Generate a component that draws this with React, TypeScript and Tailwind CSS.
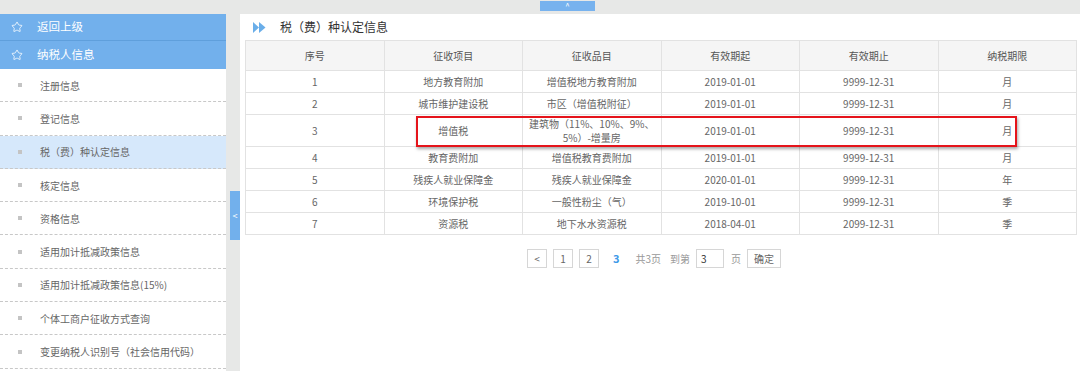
import { Star } from 'lucide-react';

const font = { fontFamily: '"Noto Sans CJK SC", "Noto Sans", sans-serif' };

const menu = [
  '注册信息',
  '登记信息',
  '税（费）种认定信息',
  '核定信息',
  '资格信息',
  '适用加计抵减政策信息',
  '适用加计抵减政策信息(15%)',
  '个体工商户征收方式查询',
  '变更纳税人识别号（社会信用代码）',
];

const rows: React.ReactNode[][] = [
  ['1', '地方教育附加', '增值税地方教育附加', '2019-01-01', '9999-12-31', '月'],
  ['2', '城市维护建设税', '市区（增值税附征）', '2019-01-01', '9999-12-31', '月'],
  [
    '3',
    '增值税',
    <>
      建筑物（11%、10%、9%、
      <br />
      5%）-增量房
    </>,
    '2019-01-01',
    '9999-12-31',
    '月',
  ],
  ['4', '教育费附加', '增值税教育费附加', '2019-01-01', '9999-12-31', '月'],
  ['5', '残疾人就业保障金', '残疾人就业保障金', '2020-01-01', '9999-12-31', '年'],
  ['6', '环境保护税', '一般性粉尘（气）', '2019-10-01', '9999-12-31', '季'],
  ['7', '资源税', '地下水水资源税', '2018-04-01', '2099-12-31', '季'],
];

const headers = ['序号', '征收项目', '征收品目', '有效期起', '有效期止', '纳税期限'];

function Sidebar() {
  return (
    <div className="w-[226px] shrink-0 bg-white">
      <div className="h-[27px] bg-[#72b0ec] border-b border-[#5f9fdc] flex items-center text-white text-[11.5px]">
        <Star className="w-[12px] h-[12px] ml-[11px]" strokeWidth={1.6} />
        <span className="ml-[14px]">返回上级</span>
      </div>
      <div className="h-[28px] bg-[#72b0ec] flex items-center text-white text-[11.5px]">
        <Star className="w-[12px] h-[12px] ml-[11px]" strokeWidth={1.6} />
        <span className="ml-[14px]">纳税人信息</span>
      </div>
      {menu.map((m, i) => (
        <div
          key={m}
          className={`h-[33.3px] flex items-center border-b border-dashed border-[#c8c8c8] text-[10px] text-[#666] ${
            i === 2 ? 'bg-[#d6e8fb]' : 'bg-white'
          }`}
        >
          <span className="w-[4px] h-[4px] bg-[#c4c4c4] ml-[18px]" />
          <span className="ml-[18px]">{m}</span>
        </div>
      ))}
    </div>
  );
}

function Arrows() {
  return (
    <svg width="13" height="11" viewBox="0 0 13 11">
      <path d="M0 0 L6 5.5 L0 11 Z" fill="#6aaee9" />
      <path d="M6 0 L12.5 5.5 L6 11 Z" fill="#6aaee9" />
    </svg>
  );
}

function PageBtn({ children }: { children: React.ReactNode }) {
  return (
    <span className="h-[19px] min-w-[20px] px-[6px] border border-[#d6d6d6] flex items-center justify-center text-[10px] text-[#666] bg-white">
      {children}
    </span>
  );
}

export default function App() {
  return (
    <div className="w-[1080px] h-[371px] bg-[#e7e8e7] overflow-hidden relative" style={font}>
      <div className="h-[14px] flex justify-center">
        <div className="w-[55px] h-[10px] mt-[1px] bg-[#77b2ee] flex items-center justify-center text-white text-[8px] leading-none ml-[55px]">
          ^
        </div>
      </div>
      <div className="flex h-[357px]">
        <Sidebar />
        <div className="w-[14px] shrink-0 flex flex-col">
          <div className="mt-[177px] ml-[4px] w-[10px] h-[49px] bg-[#72b0ec] flex items-center justify-center text-white text-[9px]">
            &lt;
          </div>
        </div>
        <div className="flex-1 bg-white relative">
          <div className="h-[26px] flex items-center pl-[13px]">
            <Arrows />
            <span className="ml-[14px] text-[12px] text-[#333]">税（费）种认定信息</span>
          </div>
          <div className="pl-[5px] pr-[3px]">
            <table className="w-full border-collapse table-fixed text-[10px] text-[#666]">
              <thead>
                <tr className="h-[30px] bg-[#f5f5f5]">
                  {headers.map((h) => (
                    <th key={h} className="border border-[#e2e2e2] font-normal text-[#555]">
                      {h}
                    </th>
                  ))}
                </tr>
              </thead>
              <tbody>
                {rows.map((r, i) => (
                  <tr key={i} className={i === 2 ? 'h-[32px]' : 'h-[22px]'}>
                    {r.map((c, j) => (
                      <td key={j} className="border border-[#e2e2e2] text-center leading-[14px]">
                        {c}
                      </td>
                    ))}
                  </tr>
                ))}
              </tbody>
            </table>
          </div>
          <div className="absolute left-[176px] top-[102px] w-[601px] h-[31px] border-[2px] border-[#e5141b] shadow-[1px_2px_3px_rgba(0,0,0,0.35)]" />
          <div className="mt-[14px] flex items-center gap-[6px] pl-[287px]">
            <PageBtn>&lt;</PageBtn>
            <PageBtn>1</PageBtn>
            <PageBtn>2</PageBtn>
            <span className="ml-[8px] text-[11px] font-bold text-[#3f9ae8]">3</span>
            <span className="ml-[10px] text-[10px] text-[#999]">共3页</span>
            <span className="ml-[3px] text-[10px] text-[#999]">到第</span>
            <span className="w-[28px] h-[19px] border border-[#d6d6d6] text-[10px] text-[#333] pl-[4px] flex items-center">
              3
            </span>
            <span className="ml-[1px] text-[10px] text-[#999]">页</span>
            <PageBtn>确定</PageBtn>
          </div>
        </div>
      </div>
    </div>
  );
}
